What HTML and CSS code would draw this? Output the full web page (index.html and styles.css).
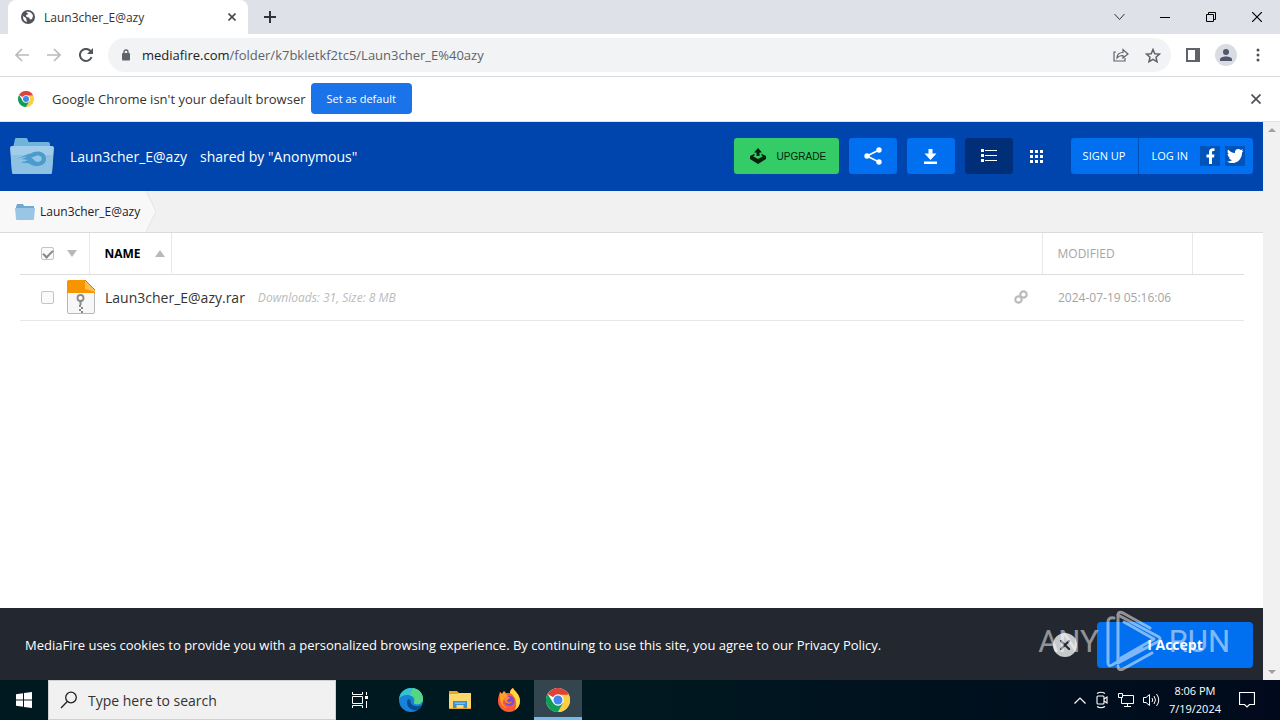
FILE: index.html
```html
<!DOCTYPE html>
<html lang="en">
<head>
    <meta charset="UTF-8">
    <meta name="viewport" content="width=device-width, initial-scale=1.0">
    <title>Laun3cher_E@azy</title>
    <link rel="stylesheet" href="styles.css">
</head>
<body>
    <svg class="defs" aria-hidden="true">
        <symbol id="chrome" viewBox="0 0 24 24">
            <circle cx="12" cy="12" r="12" fill="#fff"/>
            <path d="M12 12 L1.6 6 A12 12 0 0 1 22.4 6 Z" fill="#db4437"/>
            <path d="M12 6.5 H22.7 A12 12 0 0 1 12 24 L16.8 14.8 Z" fill="#ffcd40"/>
            <path d="M1.6 6 A12 12 0 0 0 12 24 L17 15 L12 12 L7.2 14.8 Z" fill="#0f9d58"/>
            <path d="M12 6.5 H22.7 L22.4 6 L12 4 Z" fill="#db4437"/>
            <circle cx="12" cy="12" r="5.7" fill="#fff"/>
            <circle cx="12" cy="12" r="4.5" fill="#4285f4"/>
        </symbol>
    </svg>

    <div class="tab-strip">
        <div class="tab">
            <svg width="14" height="14" viewBox="0 0 14 14"><circle cx="7" cy="7" r="7" fill="#50545a"/><path d="M2 6 L5 8 L6 12 C3 11.5 1.8 9 2 6 Z M5 2 C8 .8 11.5 2.6 12 6 L11 9 L9 9.5 L8 7.5 L5.5 7 L5 5 L7.5 4 Z" fill="#fff"/></svg>
            <span class="tab-title">Laun3cher_E@azy</span>
            <button class="icon-btn" aria-label="Close tab"><svg width="8" height="8" viewBox="0 0 8 8"><path d="M.5 .5 L7.5 7.5 M7.5 .5 L.5 7.5" stroke="#45494e" stroke-width="1.6"/></svg></button>
        </div>
        <button class="icon-btn new-tab" aria-label="New tab"><svg width="12" height="12" viewBox="0 0 12 12"><path d="M6 0 V12 M0 6 H12" stroke="#303338" stroke-width="2"/></svg></button>
        <div class="window-controls">
            <button class="icon-btn" aria-label="Search tabs"><svg width="11" height="12" viewBox="0 0 11 12"><path d="M.5 3 L5.5 8.5 L10.5 3" fill="none" stroke="#333"/></svg></button>
            <button class="icon-btn" aria-label="Minimize"><svg width="10" height="10" viewBox="0 0 10 10"><path d="M0 5.5 H10" stroke="#000"/></svg></button>
            <button class="icon-btn" aria-label="Restore"><svg width="10" height="10" viewBox="0 0 10 10"><path d="M.5 2.5 H7.5 V9.5 H.5 Z M2.5 2.5 V.5 H9.5 V7.5 H7.5" fill="none" stroke="#000"/></svg></button>
            <button class="icon-btn" aria-label="Close"><svg width="10" height="10" viewBox="0 0 10 10"><path d="M0 0 L10 10 M10 0 L0 10" stroke="#000" stroke-width="1.2"/></svg></button>
        </div>
    </div>

    <div class="toolbar">
        <div class="nav">
            <button class="icon-btn" aria-label="Back"><svg width="14" height="14" viewBox="0 0 14 14"><path d="M14 7 H1.5 M7 1 L1 7 L7 13" fill="none" stroke="#b9bbbe" stroke-width="1.7"/></svg></button>
            <button class="icon-btn" aria-label="Forward"><svg width="14" height="14" viewBox="0 0 14 14"><path d="M0 7 H12.5 M7 1 L13 7 L7 13" fill="none" stroke="#b9bbbe" stroke-width="1.7"/></svg></button>
            <button class="icon-btn" aria-label="Reload"><svg width="14" height="14" viewBox="0 0 14 14"><path d="M12.6 9 A6 6 0 1 1 11.5 3" fill="none" stroke="#505459" stroke-width="2"/><path d="M14 0 V6 H8 Z" fill="#505459"/></svg></button>
        </div>
        <div class="omnibox">
            <svg width="8" height="12" viewBox="0 0 8 12"><path d="M2 5 V3 A2 2 0 0 1 6 3 V5" fill="none" stroke="#5f6368" stroke-width="1.4"/><rect y="4" width="8" height="7.5" rx="1" fill="#5f6368"/></svg>
            <a class="url" href="#"><b>mediafire.com</b>/folder/k7bkletkf2tc5/Laun3cher_E%40azy</a>
            <button class="icon-btn" aria-label="Share"><svg width="16" height="14" viewBox="0 0 16 14"><path d="M3 4 H1 V13 H12 V10 M4 10 C4 6 7 4.5 10 4.5 V1.5 L15 6 L10 10 V7.5 C7 7.5 5.5 8 4 10 Z" fill="none" stroke="#5f6368" stroke-width="1.2"/></svg></button>
            <button class="icon-btn" aria-label="Bookmark"><svg width="16" height="15" viewBox="0 0 16 15"><path d="M8 1.5 L9.8 5.7 L14.5 6.1 L11 9.2 L12 13.7 L8 11.3 L4 13.7 L5 9.2 L1.5 6.1 L6.2 5.7 Z" fill="none" stroke="#5f6368" stroke-width="1.5"/></svg></button>
        </div>
        <button class="icon-btn" aria-label="Side panel"><svg width="14" height="14" viewBox="0 0 14 14"><rect x="1" y="1" width="12" height="12" fill="none" stroke="#5f6368" stroke-width="2"/><rect x="9" width="5" height="14" fill="#5f6368"/></svg></button>
        <button class="icon-btn profile" aria-label="Profile"><svg width="22" height="22" viewBox="0 0 22 22"><circle cx="11" cy="11" r="11" fill="#dadce4"/><circle cx="11" cy="8" r="3" fill="#50566b"/><path d="M5 17 V15.500 C5 11.500 17 11.500 17 15.500 V17 Z" fill="#50566b"/></svg></button>
        <button class="icon-btn" aria-label="Menu"><svg width="4" height="14" viewBox="0 0 4 14"><circle cx="2" cy="2" r="1.500" fill="#505459"/><circle cx="2" cy="7" r="1.500" fill="#505459"/><circle cx="2" cy="12" r="1.500" fill="#505459"/></svg></button>
    </div>

    <div class="infobar">
        <svg width="16" height="16"><use href="#chrome"/></svg>
        <span class="infobar-text">Google Chrome isn't your default browser</span>
        <button class="default-btn">Set as default</button>
        <button class="icon-btn infobar-close" aria-label="Dismiss"><svg width="10" height="10" viewBox="0 0 10 10"><path d="M.5 .5 L9.5 9.5 M9.5 .5 L.5 9.5" stroke="#505459" stroke-width="1.8"/></svg></button>
    </div>

    <div class="viewport">
        <div class="page">
            <header class="site-header">
                <svg width="44" height="36" viewBox="0 0 44 36">
                    <path d="M3 10 L5 1 Q5 0 6.500 0 H16 Q17 0 17.500 1 L18.500 4 H38 Q40 4 40 6 V10 Z" fill="#70b4dc"/>
                    <path d="M2 8 H42 Q44 8 44 10 L42 34 Q42 36 40 36 H4 Q2 36 2 34 L0 10 Q0 8 2 8 Z" fill="#a1cdea"/>
                    <path d="M1 17 H43 L42 34 Q42 36 40 36 H4 Q2 36 2 34 Z" fill="#8dc2e3"/>
                    <path d="M7 20 C12 20 15 16 21 15.500 C26 12 36 13 36 21 C36 28 26 30 20 26 C17 24 14 26 11 24 C14 24 16 23 18 22 C15 22 14 21 11 21.500 C14 20 16 19 18 18.500 C14 18.500 11 20 7 20 Z" fill="#4c9bcd"/>
                    <path d="M20 19.500 C24 20 24 24 28 24 C33 23.500 33 17.500 28 17.500 C25 17.500 24 19.500 20 19.500 Z" fill="#94c7e6"/>
                </svg>
                <h1 class="share-title"><span>Laun3cher_E@azy</span><span>shared by "Anonymous"</span></h1>
                <div class="actions">
                    <button class="upgrade"><svg width="16" height="16" viewBox="0 0 16 16"><path d="M8 0 L12 4.500 H9.500 V8 H6.500 V4.500 H4 Z" fill="#07210f"/><path d="M4.500 5.800 L0 8 V11 L8 16 L16 11 V8 L11.500 5.800 V7.500 L13 8.200 L8 11 L3 8.200 L4.500 7.500 Z" fill="#07210f"/></svg>UPGRADE</button>
                    <button class="action" aria-label="Share"><svg width="18" height="18" viewBox="0 0 18 18" fill="#fff"><path d="M15 3 L3 9 L15 15" fill="none" stroke="#fff" stroke-width="1.800"/><circle cx="15" cy="3" r="2.700"/><circle cx="3" cy="9" r="2.700"/><circle cx="15" cy="15" r="2.700"/></svg></button>
                    <button class="action" aria-label="Download"><svg width="13" height="15" viewBox="0 0 13 15" fill="#fff"><path d="M4.500 0 H8.500 V4.500 H12.500 L6.500 11 L.5 4.500 H4.500 Z M0 12.500 H13 V15 H0 Z"/></svg></button>
                    <button class="action action-current" aria-label="List view"><svg width="16" height="14" viewBox="0 0 16 14" fill="#fff"><path d="M0 0 H3 V3 H0 Z M0 5 H3 V8 H0 Z M0 10 H3 V13 H0 Z M4 1 H16 V2 H4 Z M4 6 H16 V7 H4 Z M4 11 H16 V12 H4 Z"/></svg></button>
                    <button class="action action-plain" aria-label="Grid view"><svg width="13" height="13" viewBox="0 0 13 13" fill="#fff"><path d="M0 0 H3 V3 H0 Z M5 0 H8 V3 H5 Z M10 0 H13 V3 H10 Z M0 5 H3 V8 H0 Z M5 5 H8 V8 H5 Z M10 5 H13 V8 H10 Z M0 10 H3 V13 H0 Z M5 10 H8 V13 H5 Z M10 10 H13 V13 H10 Z"/></svg></button>
                    <div class="account">
                        <a class="account-link" href="#">SIGN UP</a>
                        <a class="account-link" href="#">LOG IN</a>
                        <a class="social" href="#" aria-label="Facebook"><svg width="20" height="20" viewBox="0 0 20 20"><path d="M9 18 V11.500 H6.500 V8.500 H9 V6 C9 3 11 2 14.500 2.300 V5 C12.500 4.900 12 5.200 12 6.500 V8.500 H14.500 L14 11.500 H12 V18 Z" fill="#fff"/></svg></a>
                        <a class="social" href="#" aria-label="Twitter"><svg width="20" height="20" viewBox="0 0 20 20"><path d="M2 15.500 C4.500 15.600 5.500 15 7 14 C5.500 14 4.200 13 3.800 11.500 L5.300 11.400 C3.600 11 2.500 9.500 2.500 7.700 L4 8.200 C2.500 7 2 5 3.200 3.500 C5 5.600 7.200 6.800 10 7 C9.500 4.800 11 3 13.200 3 C14.300 3 15.200 3.400 15.800 4.100 L18 3.200 L16.800 5.200 L18.500 4.700 L17 6.700 C17.200 14.500 9 20 2 15.500 Z" fill="#fff"/></svg></a>
                    </div>
                </div>
            </header>

            <nav class="breadcrumb">
                <a class="crumb" href="#">
                    <svg width="20" height="16" viewBox="0 0 20 16"><path d="M1 3 L2 0 H8 L9 2 H19 V5 H1 Z" fill="#6fa9cf"/><path d="M0 4 H20 L19 15 Q19 16 18 16 H2 Q1 16 1 15 Z" fill="#99c6e5"/></svg>
                    Laun3cher_E@azy
                </a>
                <svg class="crumb-end" width="11" height="41" viewBox="0 0 11 41"><path d="M0 0 L10 20.500 L0 41 Z" fill="#f8f8f8"/><path d="M0 0 L10 20.500 L0 41" fill="none" stroke="#e4e4e4"/></svg>
            </nav>

            <main class="files">
                <table class="file-table">
                    <thead>
                        <tr>
                            <th class="col-check"><div class="cell"><input type="checkbox" class="check" aria-label="Select all" checked><button class="icon-btn" aria-label="Selection menu"><svg width="10" height="7" viewBox="0 0 10 7"><path d="M0 0 H10 L5 7 Z" fill="#b9b9b9"/></svg></button></div></th>
                            <th><button class="sort-name">NAME<svg width="10" height="7" viewBox="0 0 10 7"><path d="M0 7 H10 L5 0 Z" fill="#b9b9b9"/></svg></button></th>
                            <th class="col-modified">MODIFIED</th>
                            <th class="col-end"></th>
                        </tr>
                    </thead>
                    <tbody>
                        <tr>
                            <td><div class="cell"><input type="checkbox" class="check" aria-label="Select Laun3cher_E@azy.rar">
                                <svg width="28" height="34" viewBox="0 0 28 34"><path d="M2 .5 H18 L27.500 10 V32 Q27.500 33.500 26 33.500 H2 Q.5 33.500 .5 32 V2 Q.5 .5 2 .5 Z" fill="#f7f7f7" stroke="#b8b8b8"/><path d="M0 13 V2 Q0 0 2 0 H18 L28 10 V13 Z" fill="#f79400"/><path d="M18 0 L28 10 V12 L18 9 Z" fill="#ffbd4c"/><path d="M18 0 L28 10" stroke="#c97a0a"/><circle cx="13.500" cy="18" r="3" fill="#fff" stroke="#8a8a8a" stroke-width="1.800"/><path d="M13.500 21 V25" stroke="#8a8a8a" stroke-width="2"/><path d="M12 25 h2 v2 h-2 Z M14 27 h2 v2 h-2 Z M12 29 h2 v2 h-2 Z M14 31 h2 v2 h-2 Z" fill="#888"/></svg></div></td>
                            <td><div class="name-cell"><a class="file-name" href="#">Laun3cher_E@azy.rar</a><em class="file-info">Downloads: 31, Size: 8 MB</em>
                                <button class="icon-btn copy-link" aria-label="Copy link"><svg width="14" height="14" viewBox="0 0 14 14" fill="none" stroke="#bcbcbc" stroke-width="2.200"><circle cx="4.500" cy="9.500" r="3.200"/><circle cx="9.500" cy="4.500" r="3.200"/></svg></button></div></td>
                            <td class="modified">2024-07-19 05:16:06</td>
                            <td></td>
                        </tr>
                    </tbody>
                </table>
            </main>

            <div class="cookie-bar">
                <p class="cookie-text">MediaFire uses cookies to provide you with a personalized browsing experience. By continuing to use this site, you agree to our <a href="#">Privacy Policy.</a></p>
                <button class="cookie-close" aria-label="Close"><svg width="10" height="10" viewBox="0 0 10 10"><path d="M0 0 L10 10 M10 0 L0 10" stroke="#23272f" stroke-width="2"/></svg></button>
                <button class="accept">I Accept</button>
            </div>
        </div>
        <div class="scrollbar">
            <svg width="8" height="4" viewBox="0 0 8 4"><path d="M0 4 L4 0 L8 4 Z" fill="#a0a0a0"/></svg>
            <svg width="8" height="4" viewBox="0 0 8 4"><path d="M0 0 L4 4 L8 0 Z" fill="#a0a0a0"/></svg>
        </div>
        <div class="watermark">
            <span>ANY</span>
            <svg width="56" height="62" viewBox="0 0 56 62" fill="none" stroke="#fff" stroke-width="3" stroke-linejoin="round" stroke-linecap="round"><path d="M12 5 L53 27 Q55 29 53 31 L12 53 Z M18 12 L48 29 L15 48"/><path d="M8 8 Q2 7 2 12 V53 Q2 57 6 55 L36 38"/><path d="M12 5 Q12 1 17 3 L44 18 M12 56 Q12 61 17 59 L46 43"/></svg>
            <span>RUN</span>
        </div>
    </div>

    <footer class="taskbar">
        <button class="task" aria-label="Start"><svg width="16" height="16" viewBox="0 0 16 16"><path d="M0 2.300 L7 1.200 V7.500 H0 Z M8 1 L16 0 V7.500 H8 Z M0 8.500 H7 V14.800 L0 13.700 Z M8 8.500 H16 V16 L8 15 Z" fill="#fff"/></svg></button>
        <label class="search">
            <svg width="18" height="18" viewBox="0 0 18 18" fill="none" stroke="#222" stroke-width="1.300"><circle cx="11" cy="6.500" r="5.300"/><path d="M7.300 10.500 L1 17"/></svg>
            <input type="text" class="search-input" placeholder="Type here to search" aria-label="Type here to search">
        </label>
        <button class="task" aria-label="Task view"><svg width="16" height="16" viewBox="0 0 16 16" fill="none" stroke="#fff"><path d="M.5 0 V2.500 H10.500 V0 M.5 4.500 H10.500 V11.500 H.5 Z M.5 16 V13.500 H10.500 V16 M14.500 0 V3 M14.500 9 V16"/><rect x="13" y="4" width="3" height="3" fill="#fff" stroke="none"/></svg></button>
        <div class="pinned">
            <button class="task" aria-label="Edge"><svg width="24" height="24" viewBox="0 0 24 24"><circle cx="12" cy="12" r="12" fill="#1683d8"/><path d="M0 11 C1 4 6 0 12 0 C19 0 24 5 24 11 C24 15 20 17 16 16 C14.500 15.500 15 14.500 15.500 13.500 C16 9 12 7 8 7 C4 7 1 9 0 11 Z" fill="#35c1d0"/><path d="M14 0 C20 1 24 5 24 11 C24 15 20 17 16 16 C14.500 15.500 15 14.500 15.500 13.500 C16 9 13 8 11 7 Z" fill="#56d684"/><path d="M9 11 C6 16 10 22 17 22.500 C20 21 22 19 23 17 C16 20 11 17 11.500 12 Z" fill="#0c4a94"/></svg></button>
            <button class="task" aria-label="File Explorer"><svg width="22" height="18" viewBox="0 0 22 18"><path d="M0 0 H8 L10 2 H22 V18 H0 Z" fill="#e9a620"/><path d="M0 3 H8 L10 2 H22 V17 H0 Z" fill="#fcd76b"/><path d="M4 10 H18 V17 H14.500 V14 H7.500 V17 H4 Z" fill="#3b92d0"/><rect x="6" y="11.500" width="10" height="1.500" fill="#79bce8"/></svg></button>
            <button class="task" aria-label="Firefox"><svg width="24" height="24" viewBox="0 0 24 24"><path d="M3 4 L5 6 L7 3 L9 5 L13 5 C13 3 14 1 16 0 C17 3 23 6 23 13 C23 19 18 24 12 24 C6 24 1 19 1 13 C1 9 2 7 3 4 Z" fill="#ff5a36"/><path d="M13 5 C13 3 14 1 16 0 C17 3 23 6 23 13 C23 17 21 20 18 22 C21 15 18 8 13 5 Z" fill="#ffd83d"/><path d="M3 4 L5 6 L7 3 L9 6 L12 9 L7 11 C4 15 7 19 11 20 C6 20 2 16 3 4 Z" fill="#ffa02c"/><circle cx="12.500" cy="13" r="5" fill="#7b4be0"/><path d="M7 10 C10 7 12 9 13 10 L10 12 C10 15 13 15 15 13 C15 16 8 18 7 10 Z" fill="#ff8a28"/></svg></button>
            <button class="task task-active" aria-label="Chrome"><svg width="24" height="24"><use href="#chrome"/></svg></button>
        </div>
        <div class="tray">
            <svg width="12" height="7" viewBox="0 0 12 7"><path d="M.5 6.500 L6 1 L11.500 6.500" fill="none" stroke="#fff" stroke-width="1.200"/></svg>
            <svg width="14" height="18" viewBox="0 0 14 18" fill="none" stroke="#fff" stroke-width="1.100"><rect x="2" y="5" width="7" height="8" rx="1"/><path d="M9 8 L12 6 V12 L9 10 M2 2.500 Q6 0 10 2.500 M2 15.500 Q6 18 10 15.500"/></svg>
            <svg width="16" height="14" viewBox="0 0 16 14" fill="none" stroke="#fff"><path d="M5 2.500 H15.500 V10.500 H3.500 V5 M9.500 10.500 V13 M6 13.500 H13 M.5 .5 H4.500 V4.500 H.5 Z"/></svg>
            <svg width="17" height="14" viewBox="0 0 17 14" fill="none" stroke="#fff"><path d="M.5 4.500 H3 L6.500 1.500 V12.500 L3 9.500 H.5 Z M9 5 Q10.500 7 9 9 M11 3 Q14 7 11 11 M13.500 1 Q18 7 13.500 13"/></svg>
            <time class="clock">8:06 PM<br>7/19/2024</time>
            <svg width="16" height="16" viewBox="0 0 16 16"><path d="M.5 .5 H15.500 V12.500 H10.500 L8 15 L5.500 12.500 H.5 Z" fill="none" stroke="#fff" stroke-width="1.200"/></svg>
        </div>
    </footer>
</body>
</html>
```
FILE: styles.css
```css
* {
    box-sizing: border-box;
}
body {
    margin: 0;
    height: 100vh;
    display: flex;
    flex-direction: column;
    overflow: hidden;
    font-family: "Open Sans", "Noto Sans", sans-serif;
    font-size: 12px;
    color: #333;
    background: #fff;
}
button, input {
    font: inherit;
    color: inherit;
    margin: 0;
}
button {
    border: 0;
    padding: 0;
    background: none;
}
a {
    color: inherit;
    text-decoration: none;
}
svg {
    flex: none;
    display: block;
}
.defs {
    display: none;
}
.icon-btn {
    display: flex;
    align-items: center;
    justify-content: center;
}

/* browser chrome */
.tab-strip {
    height: 34px;
    flex: none;
    display: flex;
    align-items: center;
    padding-left: 8px;
    background: #dee1e8;
}
.tab {
    width: 240px;
    height: 34px;
    display: flex;
    align-items: center;
    gap: 9px;
    padding: 0 12px 0 13px;
    border-radius: 8px 8px 0 0;
    background: #fff;
}
.tab-title {
    flex: 1;
}
.new-tab {
    margin-left: 16px;
}
.window-controls {
    margin-left: auto;
    display: flex;
}
.window-controls .icon-btn {
    width: 46px;
    height: 28px;
}
.toolbar {
    height: 43px;
    flex: none;
    display: flex;
    align-items: center;
    gap: 15px;
    padding: 0 20px 0 15px;
    border-bottom: 1px solid #d8dadd;
}
.nav {
    display: flex;
    gap: 18px;
}
.omnibox {
    flex: 1;
    height: 34px;
    display: flex;
    align-items: center;
    gap: 16px;
    padding: 0 10px 0 14px;
    border-radius: 17px;
    background: #f1f3f4;
}
.url {
    flex: 1;
    margin-left: -4px;
    font-size: 13px;
    color: #5f6368;
}
.url b {
    font-weight: 400;
    color: #202124;
}
.profile {
    margin-right: 4px;
}
.infobar {
    height: 45px;
    flex: none;
    display: flex;
    align-items: center;
    padding: 0 19px 1px 18px;
    border-bottom: 1px solid #d8e4f0;
}
.infobar-text {
    margin: 0 5px 0 18px;
    font-size: 13px;
}
.default-btn {
    height: 31px;
    padding: 0 16px;
    border-radius: 4px;
    background: #1a73e8;
    color: #fff;
    font-size: 11px;
}
.infobar-close {
    margin-left: auto;
}

/* web page */
.viewport {
    position: relative;
    flex: 1;
    min-height: 0;
    display: flex;
}
.page {
    flex: 1;
    display: flex;
    flex-direction: column;
}
.scrollbar {
    width: 17px;
    display: flex;
    flex-direction: column;
    justify-content: space-between;
    align-items: center;
    padding: 6px 0;
    background: #f1f1f1;
}
.site-header {
    height: 69px;
    display: flex;
    align-items: center;
    padding: 0 10px 1px;
    background: #0045ad;
    color: #fff;
}
.share-title {
    display: flex;
    gap: 13px;
    margin: 0 0 0 16px;
    font-size: 14px;
    font-weight: 400;
}
.actions {
    margin-left: auto;
    display: flex;
    gap: 10px;
}
.action, .upgrade {
    width: 48px;
    height: 36px;
    display: flex;
    align-items: center;
    justify-content: center;
    border-radius: 3px;
    background: #0070f0;
}
.upgrade {
    width: 105px;
    justify-content: flex-start;
    gap: 11px;
    padding-left: 16px;
    background: #33cc66;
    color: #07210f;
    font-family: "Liberation Sans", Arial, sans-serif;
    font-size: 10px;
}
.action-current {
    background: #002f78;
}
.action-plain {
    margin-left: -10px;
    background: none;
}
.account {
    height: 36px;
    display: flex;
    align-items: center;
    gap: 5px;
    padding-right: 8px;
    border-radius: 3px;
    background: #0070f0;
}
.account-link {
    padding: 0 7px 0 12px;
    font-size: 11px;
    line-height: 36px;
}
.account-link:first-child {
    padding-right: 13px;
    margin-right: -5px;
    border-right: 1px solid #0050b8;
}
.social {
    background: #0053b8;
}
.breadcrumb {
    height: 42px;
    display: flex;
    border-bottom: 1px solid #dadada;
    background: #f1f1f1;
}
.crumb {
    display: flex;
    align-items: center;
    gap: 5px;
    padding: 0 6px 0 15px;
    background: #f8f8f8;
    color: #222;
}
.files {
    flex: 1;
    padding: 0 19px 0 20px;
}
.file-table {
    width: 100%;
    border-collapse: collapse;
    table-layout: fixed;
}
.file-table th, .file-table td {
    height: 41px;
    padding: 0;
    text-align: left;
    font-weight: 400;
    color: #a5a5a5;
    border-bottom: 1px solid #ddd;
}
.file-table td {
    height: 46px;
    border-bottom-color: #e8e8e8;
}
.file-table .col-check {
    width: 69px;
    border-right: 1px solid #e8e8e8;
}
.file-table .col-modified {
    width: 150px;
    padding-left: 15px;
    border-left: 1px solid #e8e8e8;
    border-right: 1px solid #e8e8e8;
}
.file-table .col-end {
    width: 52px;
}
.file-table .modified {
    padding-left: 16px;
}
.cell {
    display: flex;
    align-items: center;
    gap: 13px;
    padding-left: 21px;
}
.check {
    appearance: none;
    flex: none;
    width: 13px;
    height: 13px;
    border: 1px solid #c4c4c4;
    border-radius: 2px;
    background: #fafafa;
}
.check:checked::before {
    content: "";
    display: block;
    width: 8px;
    height: 4px;
    margin: 2px 0 0 1px;
    border: solid #888;
    border-width: 0 0 2px 2px;
    transform: rotate(-45deg);
}
.sort-name {
    height: 40px;
    display: flex;
    align-items: center;
    gap: 14px;
    padding: 0 6px 0 15px;
    border-right: 1px solid #e8e8e8;
    font-weight: 700;
    color: #000;
}
.name-cell {
    display: flex;
    align-items: center;
    padding: 0 14px 0 16px;
}
.file-name {
    font-size: 14px;
    color: #333;
}
.file-info {
    margin-left: 13px;
    color: #bbb;
}
.copy-link {
    margin-left: auto;
}
.cookie-bar {
    height: 72px;
    display: flex;
    align-items: center;
    padding: 1px 10px 0 25px;
    background: #23272f;
    color: #fff;
}
.cookie-text {
    flex: 1;
    margin: 0;
    font-size: 13px;
}
.cookie-close {
    width: 24px;
    height: 24px;
    margin-right: 20px;
    display: flex;
    align-items: center;
    justify-content: center;
    border-radius: 50%;
    background: #c8c9cb;
}
.accept {
    width: 156px;
    height: 46px;
    border-radius: 4px;
    background: #0070f0;
    font-size: 14px;
    font-weight: 700;
}
.watermark {
    position: absolute;
    right: 50px;
    bottom: 8px;
    display: flex;
    align-items: center;
    gap: 7px;
    color: #fff;
    opacity: 0.5;
    pointer-events: none;
    font-family: Roboto, sans-serif;
    font-size: 31px;
}

/* taskbar */
.taskbar {
    height: 40px;
    flex: none;
    display: flex;
    background: linear-gradient(90deg, #001820, #001820 50%, #000a1c);
    color: #fff;
}
.task {
    width: 48px;
    display: flex;
    align-items: center;
    justify-content: center;
}
.pinned {
    display: flex;
    gap: 1px;
    margin-left: 3px;
}
.task-active {
    border-top: 3px solid #33454e;
    border-bottom: 3px solid #76b9ed;
    background: #33454e;
}
.search {
    width: 288px;
    display: flex;
    align-items: center;
    gap: 10px;
    padding: 0 11px;
    background: #f1f1f1;
    border: 1px solid #d0d0d0;
}
.search-input {
    flex: 1;
    min-width: 0;
    padding: 0;
    border: 0;
    outline: 0;
    background: none;
    font-size: 14px;
}
.search-input::placeholder {
    color: #333;
    opacity: 1;
}
.tray {
    margin-left: auto;
    display: flex;
    align-items: center;
    gap: 9px;
    padding-right: 25px;
}
.clock {
    margin-right: 9px;
    font-size: 11px;
    line-height: 18px;
    text-align: center;
}
```
